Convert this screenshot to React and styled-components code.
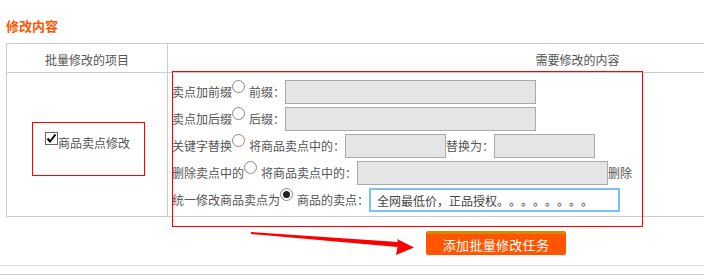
import React from 'react';
import styled, {createGlobalStyle} from 'styled-components';

const GlobalStyle = createGlobalStyle`
  html, body {
    margin: 0;
    padding: 0;
    overflow: hidden;
    background: #fff;
  }
  body {
    font-family: "Noto Sans CJK SC", "Liberation Sans", sans-serif;
    font-size: 12px;
    color: #555;
    text-spacing-trim: space-all;
  }
`;

const Page = styled.div`
  position: relative;
  width: 704px;
  height: 279px;
  overflow: hidden;
`;

const Inner = styled.div`
  padding: 0 6px;
`;

const Title = styled.h3`
  margin: 0 0 7px;
  padding-top: 16px;
  height: 20px;
  line-height: 20px;
  font-size: 13px;
  font-weight: bold;
  color: #ff5500;
`;

const Grid = styled.div`
  display: grid;
  grid-template-columns: 161px 820px;
  width: 981px;
  border-left: 1px solid #ccc;
  border-top: 1px solid #ccc;
`;

const HeadCell = styled.div`
  box-sizing: border-box;
  height: 29px;
  padding-top: 3px;
  line-height: 25px;
  text-align: center;
  border-right: 1px solid #ccc;
  border-bottom: 1px solid #ccc;
  color: #555;
`;

const ItemCell = styled.div`
  box-sizing: border-box;
  height: 144px;
  display: flex;
  align-items: center;
  justify-content: center;
  padding: 0 0 4px 1px;
  border-right: 1px solid #ccc;
  border-bottom: 1px solid #ccc;
`;

const ContentCell = styled.div`
  box-sizing: border-box;
  height: 144px;
  padding: 7px 0 0 4px;
  border-right: 1px solid #ccc;
  border-bottom: 1px solid #ccc;
`;

const Row = styled.div`
  display: flex;
  align-items: center;
  height: 24px;
  margin-bottom: 3px;
  line-height: 24px;
  white-space: nowrap;
`;

const Label = styled.span`
  color: #555;
`;

const Radio = styled.input.attrs({type: 'radio'})`
  appearance: none;
  box-sizing: border-box;
  align-self: flex-start;
  width: 13px;
  height: 13px;
  margin: 0 4px 0 0;
  border: 1px solid #8a8a8a;
  border-radius: 50%;
  background: #fff;
  position: relative;
  &:checked::after {
    content: '';
    position: absolute;
    left: 2px;
    top: 2px;
    width: 7px;
    height: 7px;
    border-radius: 50%;
    background: #222;
  }
`;

const Field = styled.input`
  box-sizing: border-box;
  width: ${p => p.$w}px;
  height: 24px;
  margin: 0;
  padding: 0 6px;
  border: 1px solid #aaa;
  background: #e5e5e5;
  font-family: inherit;
  font-size: 12px;
  color: #333;
  outline: none;
  text-spacing-trim: space-all;
`;

const FocusField = styled(Field)`
  border: 2px solid #7cc0f6;
  background: #fff;
  padding: 0 6px;
  color: #444;
`;

const CheckLine = styled.label`
  display: flex;
  align-items: center;
  height: 24px;
  line-height: 24px;
  color: #555;
`;

const CheckBox = styled.span`
  box-sizing: border-box;
  align-self: flex-start;
  width: 13px;
  height: 13px;
  margin-top: 1px;
  border: 1px solid #666;
  background: #fff;
  display: flex;
  align-items: center;
  justify-content: center;
`;

const Actions = styled.div`
  padding: 14px 0 10px 420px;
`;

const SubmitButton = styled.button`
  box-sizing: border-box;
  width: 140px;
  height: 24px;
  padding: 0;
  border: none;
  border-top: 3px solid #d58a00;
  border-radius: 2px;
  background: #ff5500;
  color: #fff;
  font-family: inherit;
  font-size: 13px;
  line-height: 20px;
  letter-spacing: 0.3px;
`;

const Rule = styled.div`
  height: 0;
  border-top: 1px solid ${p => p.$color};
  margin-bottom: ${p => p.$gap || 0}px;
`;

const Mark = styled.div`
  position: absolute;
  left: ${p => p.$x}px;
  top: ${p => p.$y}px;
  width: ${p => p.$w}px;
  height: ${p => p.$h}px;
  box-sizing: border-box;
  border: 1px solid #ff0000;
  pointer-events: none;
`;

const ArrowLayer = styled.svg`
  position: absolute;
  left: 0;
  top: 0;
  pointer-events: none;
`;

const App = () => (
  <Page>
    <GlobalStyle />
    <Inner>
      <Title>修改内容</Title>
      <Grid>
        <HeadCell>批量修改的项目</HeadCell>
        <HeadCell>需要修改的内容</HeadCell>
        <ItemCell>
          <CheckLine>
            <CheckBox>
              <svg width="11" height="11" viewBox="0 0 11 11">
                <path d="M1.5 5.5 L4 8.5 L9.5 1.5" fill="none" stroke="#000" strokeWidth="2" />
              </svg>
            </CheckBox>
            商品卖点修改
          </CheckLine>
        </ItemCell>
        <ContentCell>
          <Row>
            <Label>卖点加前缀</Label>
            <Radio name="mode" />
            <Label>前缀：</Label>
            <Field $w={251} />
          </Row>
          <Row>
            <Label>卖点加后缀</Label>
            <Radio name="mode" />
            <Label>后缀：</Label>
            <Field $w={251} />
          </Row>
          <Row>
            <Label>关键字替换</Label>
            <Radio name="mode" />
            <Label>将商品卖点中的：</Label>
            <Field $w={101} />
            <Label>替换为：</Label>
            <Field $w={101} />
          </Row>
          <Row>
            <Label>删除卖点中的</Label>
            <Radio name="mode" />
            <Label>将商品卖点中的：</Label>
            <Field $w={251} />
            <Label>删除</Label>
          </Row>
          <Row>
            <Label>统一修改商品卖点为</Label>
            <Radio name="mode" defaultChecked />
            <Label>商品的卖点：</Label>
            <FocusField $w={251} defaultValue="全网最低价，正品授权。。。。。。。。" />
          </Row>
        </ContentCell>
      </Grid>
      <Actions>
        <SubmitButton type="button">添加批量修改任务</SubmitButton>
      </Actions>
    </Inner>
    <Rule $color="#ddd" $gap={8} />
    <Rule $color="#ccc" />

    <Mark $x={32} $y={122} $w={113} $h={54} />
    <Mark $x={172} $y={71} $w={471} $h={156} />
    <ArrowLayer width="704" height="279">
      <polygon points="251,232 398,242 397,239 414,247.5 396,255 397.5,247 251,234" fill="#ff0000" />
    </ArrowLayer>
  </Page>
);

export default App;
